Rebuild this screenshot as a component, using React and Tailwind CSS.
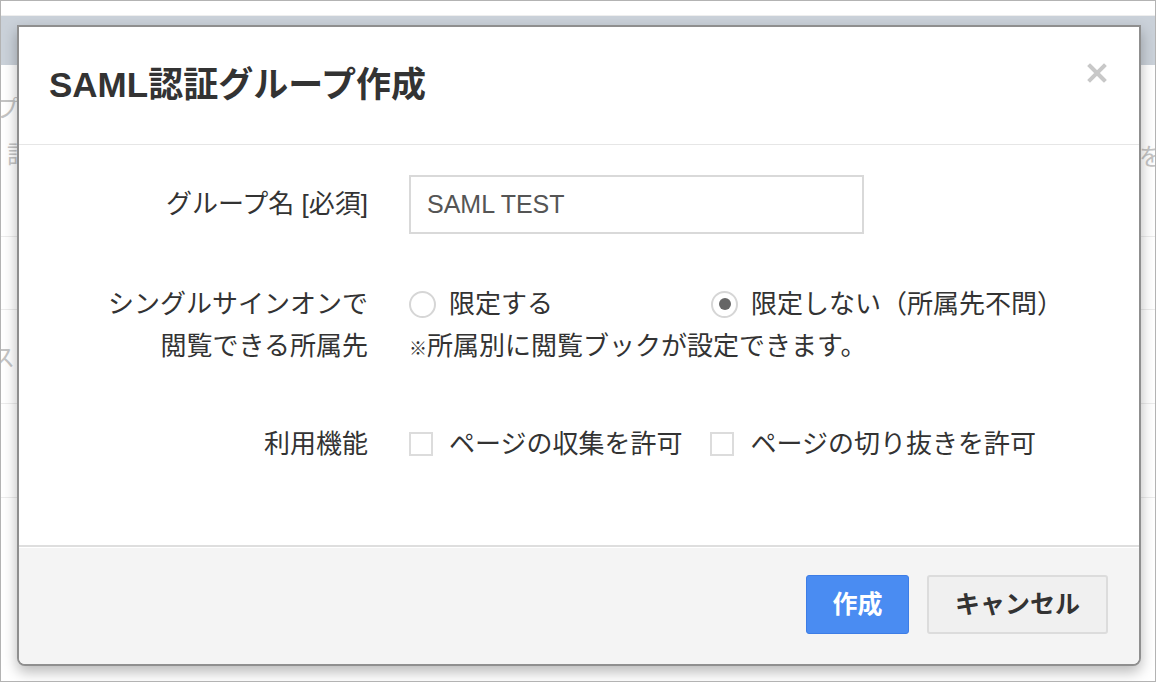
import { useState } from 'react';

const FONT = { fontFamily: '"Liberation Sans", "Noto Sans CJK JP", sans-serif' };

function Radio({ checked, label, onClick }) {
  return (
    <button type="button" onClick={onClick} className="flex items-center gap-[13px] text-left">
      <span className="flex h-[27px] w-[27px] items-center justify-center rounded-full border-2 border-[#d6d6d6] bg-white">
        {checked && <span className="h-[12px] w-[12px] rounded-full bg-[#666]" />}
      </span>
      <span>{label}</span>
    </button>
  );
}

function Checkbox({ checked, label, onClick }) {
  return (
    <button type="button" onClick={onClick} className="flex items-center gap-[16px]">
      <span className="flex h-[24px] w-[24px] items-center justify-center border-2 border-[#dcdcdc] bg-white">
        {checked && <span className="h-[10px] w-[10px] bg-[#666]" />}
      </span>
      <span>{label}</span>
    </button>
  );
}

export default function App() {
  const [name, setName] = useState('SAML TEST');
  const [limit, setLimit] = useState(false);
  const [collect, setCollect] = useState(false);
  const [clip, setClip] = useState(false);

  return (
    <div style={FONT} className="relative h-[682px] w-[1156px] overflow-hidden border border-[#b3b3b3] bg-white">
      {/* page behind the dialog */}
      <div className="h-[15px] border-b border-[#eeeeee] bg-white" />
      <div className="h-[49px] bg-[#cad1d9]" />
      <div className="relative text-[24px] text-[#c4c4c4]">
        <div className="h-[172px] border-b border-[#ececec] pt-[26px]">
          <div className="-ml-[6px]">プ</div>
          <div className="ml-[6px] mt-[10px]">記</div>
          <div className="absolute right-[-8px] top-[74px]">を</div>
        </div>
        <div className="h-[73px] border-b border-[#ececec]" />
        <div className="h-[94px] border-b border-[#ececec] pt-[30px]">
          <div className="-ml-[10px]">ス</div>
        </div>
        <div className="h-[94px] border-b border-[#ececec]" />
      </div>

      {/* dialog */}
      <div className="absolute left-[16px] top-[24px] flex h-[641px] w-[1124px] flex-col rounded-b-[8px] border-2 border-[#8f8f8f] bg-white shadow-[0_6px_14px_rgba(0,0,0,0.28)]">
        <div className="relative flex h-[118px] items-center border-b border-[#e6e6e6] pl-[30px]">
          <h1 className="text-[35px] font-bold text-[#333]">SAML認証グループ作成</h1>
          <button type="button" className="absolute right-[30px] top-[34px] flex h-[24px] w-[24px] items-center justify-center">
            <svg width="20" height="20" viewBox="0 0 20 20">
              <path d="M3 3 L17 17 M17 3 L3 17" stroke="#c8c8c8" strokeWidth="4" strokeLinecap="square" />
            </svg>
          </button>
        </div>

        <div className="flex-1 pt-[30px] text-[26px] text-[#333]">
          <div className="flex items-center">
            <div className="w-[349px] text-right">グループ名 [必須]</div>
            <input
              value={name}
              onChange={(e) => setName(e.target.value)}
              className="ml-[41px] h-[59px] w-[455px] border-2 border-[#d9d9d9] px-[16px] text-[25px] text-[#555] outline-none"
            />
          </div>

          <div className="mt-[49px] flex leading-[42px]">
            <div className="w-[349px] text-right">
              シングルサインオンで
              <br />
              閲覧できる所属先
            </div>
            <div className="ml-[41px]">
              <div className="flex">
                <div className="w-[302px]">
                  <Radio checked={limit} label="限定する" onClick={() => setLimit(true)} />
                </div>
                <Radio checked={!limit} label="限定しない（所属先不問）" onClick={() => setLimit(false)} />
              </div>
              <div>
                <span className="text-[18px]">※</span>所属別に閲覧ブックが設定できます。
              </div>
            </div>
          </div>

          <div className="mt-[53px] flex items-center leading-[42px]">
            <div className="w-[349px] text-right">利用機能</div>
            <div className="ml-[41px] flex gap-[28px]">
              <Checkbox checked={collect} label="ページの収集を許可" onClick={() => setCollect(!collect)} />
              <Checkbox checked={clip} label="ページの切り抜きを許可" onClick={() => setClip(!clip)} />
            </div>
          </div>
        </div>

        <div className="flex h-[119px] items-start justify-end gap-[18px] rounded-b-[6px] border-t-2 border-[#dedede] bg-[#f4f4f4] pr-[31px] pt-[28px] shadow-[inset_0_1px_0_#ffffff]">
          <button type="button" className="h-[59px] w-[103px] rounded-[3px] border border-[#3d7de6] bg-[#4a8cf2] text-[25px] font-bold text-white">
            作成
          </button>
          <button type="button" className="h-[59px] w-[181px] rounded-[3px] border-2 border-[#dcdcdc] bg-[#f0f0f0] text-[25px] font-bold text-[#333]">
            キャンセル
          </button>
        </div>
      </div>
    </div>
  );
}
